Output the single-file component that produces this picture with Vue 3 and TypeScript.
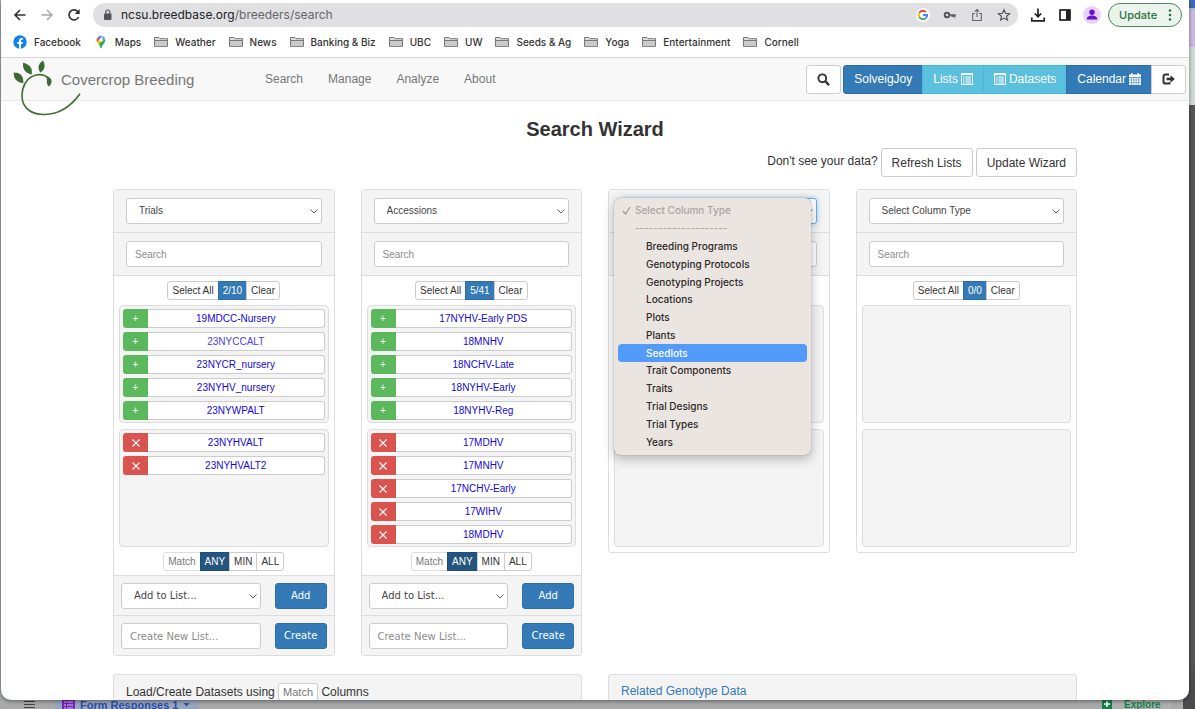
<script setup lang="ts">
import { ref } from 'vue'

interface Column {
  id: string
  type: string
  counts: string
  available: string[]
  selected: string[]
  visited?: string
  hasLists: boolean
  open?: boolean
}

const bookmarks: string[] = ['Weather', 'News', 'Banking & Biz', 'UBC', 'UW', 'Seeds & Ag', 'Yoga', 'Entertainment', 'Cornell']
const navLinks: string[] = ['Search', 'Manage', 'Analyze', 'About']
const columnTypes: string[] = [
  'Breeding Programs', 'Genotyping Protocols', 'Genotyping Projects', 'Locations', 'Plots', 'Plants',
  'Seedlots', 'Trait Components', 'Traits', 'Trial Designs', 'Trial Types', 'Years',
]
const highlighted = ref('Seedlots')
const modes: string[] = ['ANY', 'MIN', 'ALL']

const columns = ref<Column[]>([
  {
    id: 'c1', type: 'Trials', counts: '2/10', hasLists: true, visited: '23NYCCALT',
    available: ['19MDCC-Nursery', '23NYCCALT', '23NYCR_nursery', '23NYHV_nursery', '23NYWPALT'],
    selected: ['23NYHVALT', '23NYHVALT2'],
  },
  {
    id: 'c2', type: 'Accessions', counts: '5/41', hasLists: true,
    available: ['17NYHV-Early PDS', '18MNHV', '18NCHV-Late', '18NYHV-Early', '18NYHV-Reg'],
    selected: ['17MDHV', '17MNHV', '17NCHV-Early', '17WIHV', '18MDHV'],
  },
  { id: 'c3', type: 'Select Column Type', counts: '0/0', hasLists: false, available: [], selected: [], open: true },
  { id: 'c4', type: 'Select Column Type', counts: '0/0', hasLists: false, available: [], selected: [] },
])
</script>

<template>
  <div class="desktop">
    <div class="window">
      <header class="toolbar">
        <button class="tool" aria-label="Back">
          <svg width="16" height="16" viewBox="0 0 16 16" fill="none" stroke="#333" stroke-width="1.6"><path d="M13.5 8H3M8 3L3 8l5 5" /></svg>
        </button>
        <button class="tool" aria-label="Forward">
          <svg width="16" height="16" viewBox="0 0 16 16" fill="none" stroke="#a5a5a5" stroke-width="1.4"><path d="M2.500 8H13M8 3l5 5-5 5" /></svg>
        </button>
        <button class="tool" aria-label="Reload">
          <svg width="16" height="16" viewBox="0 0 16 16" fill="none" stroke="#333" stroke-width="1.7"><path d="M12.600 10A5 5 0 1 1 11.800 4.600" /><path d="M13.700 2v5H8.700z" fill="#333" stroke="none" /></svg>
        </button>
        <div class="address">
          <svg width="9" height="12" viewBox="0 0 9 12"><rect x="1" y="4.500" width="7.500" height="6.500" rx="1" fill="#555" /><path d="M2.800 5V3a2 2 0 0 1 4 0v2" fill="none" stroke="#555" stroke-width="1.200" /></svg>
          <span class="url">ncsu.breedbase.org<i>/breeders/search</i></span>
          <span class="address-icons">
            <button class="mini" aria-label="Google">
              <svg width="14" height="14" viewBox="0 0 14 14"><circle cx="7" cy="7" r="7" fill="#fff" /><g fill="none" stroke-width="1.900"><path d="M3.300 4.900A4.200 4.200 0 0 1 10 4.100" stroke="#ea4335" /><path d="M3.300 4.900a4.200 4.200 0 0 0 0 4.200" stroke="#fbbc05" /><path d="M3.300 9.100a4.200 4.200 0 0 0 6.500 1" stroke="#34a853" /><path d="M9.800 10.100A4 4 0 0 0 11.200 7H7" stroke="#4285f4" /></g></svg>
            </button>
            <button class="mini" aria-label="Passwords">
              <svg width="14" height="14" viewBox="0 0 14 14" fill="none" stroke="#555"><circle cx="4" cy="7" r="2.300" stroke-width="1.900" /><path d="M6.500 7h6.200M11.500 7v2.600M9.300 7v2" stroke-width="1.700" /></svg>
            </button>
            <button class="mini" aria-label="Share">
              <svg width="14" height="14" viewBox="0 0 14 14" fill="none" stroke="#666" stroke-width="1.100"><path d="M5 5.500H2.700v7h8.600v-7H9M7 9V1.500M4.800 3.600L7 1.500l2.200 2.100" /></svg>
            </button>
            <button class="mini" aria-label="Bookmark">
              <svg width="14" height="14" viewBox="0 0 14 14" fill="none" stroke="#555" stroke-width="1.200"><path d="M7 1.700l1.600 3.600 3.900.4-2.900 2.600.8 3.800L7 10.100l-3.400 2 .8-3.800L1.500 5.700l3.900-.4z" /></svg>
            </button>
          </span>
        </div>
        <div class="tool-right">
          <button class="tool" aria-label="Downloads">
            <svg width="16" height="16" viewBox="0 0 16 16" fill="none" stroke="#222" stroke-width="1.700"><path d="M8 1.500v8M4.800 6.500L8 9.700l3.200-3.200M1.800 10.500v3.400h12.400v-3.400" /></svg>
          </button>
          <button class="tool" aria-label="Side panel">
            <svg width="14" height="14" viewBox="0 0 14 14"><rect x="2" y="2" width="10" height="10" fill="none" stroke="#222" stroke-width="1.700" /><path d="M8 2h4v10H8z" fill="#222" /></svg>
          </button>
          <button class="tool" aria-label="Profile">
            <svg width="18" height="18" viewBox="0 0 18 18"><circle cx="9" cy="9" r="9" fill="#e6d3fb" /><circle cx="9" cy="6.200" r="2.700" fill="#6a0fd0" /><path d="M3.700 13.600c0-3 2.700-4 5.300-4s5.300 1 5.300 4z" fill="#6a0fd0" /></svg>
          </button>
          <button class="update">Update
            <svg width="4" height="14" viewBox="0 0 4 14" fill="#27733c"><circle cx="2" cy="2.500" r="1.300" /><circle cx="2" cy="7" r="1.300" /><circle cx="2" cy="11.500" r="1.300" /></svg>
          </button>
        </div>
      </header>

      <nav class="bookmarks" aria-label="Bookmarks">
        <a href="#">
          <svg width="14" height="14" viewBox="0 0 14 14"><circle cx="7" cy="7" r="6.700" fill="#1080f0" /><path d="M6 13.700V9H4.300V7H6V5.600c0-1.800 1-2.700 2.600-2.700.5 0 1 .1 1.300.1v1.700h-.8c-.8 0-1.100.5-1.100 1V7h1.800l-.3 2H8v4.700z" fill="#fff" /></svg>
          Facebook</a>
        <a href="#">
          <svg width="14" height="14" viewBox="-2 0 14 14"><path d="M5 .8A4.300 4.300 0 0 0 1.600 2.400L3.700 4.200 6.400 1z" fill="#4285f4" /><path d="M1.600 2.400A4.300 4.300 0 0 0 1 6.700L3.700 4.200z" fill="#ea4335" /><path d="M6.400 1A4.300 4.300 0 0 1 9.200 4L6.500 6z" fill="#5a9bf5" /><path d="M1 6.700c.4.900 1 1.600 1.500 2.300L6.600 6 3.700 4.200z" fill="#fbbc04" /><path d="M9.200 4c.7 3.800-3 5.300-3.600 8.700-.2.800-1 .8-1.200 0-.3-1.600-1-2.600-1.900-3.700z" fill="#34a853" /><circle cx="5" cy="5" r="1.500" fill="#fff" /></svg>
          Maps</a>
        <a v-for="name in bookmarks" :key="name" href="#">
          <svg width="14" height="12" viewBox="0 0 14 12" stroke="#777"><path d="M.5 10.500V1.500H5l1 1.200h7.500v7.800z" fill="#dedede" /><path d="M1 4.500h12.500" fill="none" /><path d="M1 5.200h12v5H1z" fill="#c9c9c9" stroke="none" /></svg>
          {{ name }}</a>
      </nav>

      <div class="navbar">
        <svg class="logo" viewBox="0 0 210 170" aria-label="Covercrop logo" role="img">
          <path d="M108 58C96 34 42 36 29 88c-10 48 18 76 67 75 50-1 82-30 105-62" fill="none" stroke="#436f38" stroke-width="5" />
          <g fill="#3d6b33"><path d="M2 37c18 0 30 8 29 32C14 66 2 60 2 37z" /><path d="M30 8c18 4 30 14 26 35C40 40 28 30 30 8z" /><path d="M90 1c8 14 6 28-8 36C72 24 76 10 90 1z" /><path d="M106 50c14 8 12 22 1 29C98 70 104 60 100 50z" /></g>
        </svg>
        <a class="brand" href="#">Covercrop Breeding</a>
        <nav class="links" aria-label="Main"><a v-for="l in navLinks" :key="l" href="#">{{ l }}</a></nav>
        <div class="account">
          <button class="btn" aria-label="Search">
            <svg width="13" height="13" viewBox="0 0 13 13" fill="none" stroke="#333"><circle cx="5.300" cy="5.300" r="3.900" stroke-width="1.900" /><path d="M8.200 8.200l3.900 3.900" stroke-width="2.400" /></svg>
          </button>
          <div class="group">
            <button class="btn primary">SolveigJoy</button>
            <button class="btn info">Lists
              <svg width="12" height="12" viewBox="0 0 12 12" fill="none" stroke="#fff"><path d="M.5.500h11v11H.5zM.5 1.500h11" /><path d="M2 4h1.500M4.500 4H10M2 6h1.500M4.500 6H10M2 8h1.500M4.500 8H10M2 10h1.500M4.500 10H10" /></svg>
            </button>
            <button class="btn info">
              <svg width="12" height="12" viewBox="0 0 12 12" fill="none" stroke="#fff"><path d="M.5.500h11v11H.5zM.5 1.500h11" /><path d="M2 4h1.500M4.500 4H10M2 6h1.500M4.500 6H10M2 8h1.500M4.500 8H10M2 10h1.500M4.500 10H10" /></svg>
              Datasets</button>
            <button class="btn primary">Calendar
              <svg width="12" height="12" viewBox="0 0 12 12"><path d="M0 1.500h2V0h1.500v1.500h5V0H10v1.500h2V4H0zM0 4.700h12V12H0z" fill="#fff" /><path d="M0 7h12M0 9.500h12M2.500 5v7M4.800 5v7M7.200 5v7M9.500 5v7" stroke="#337ab7" stroke-width=".5" /></svg>
            </button>
            <button class="btn" aria-label="Log out">
              <svg width="13" height="12" viewBox="0 0 13 12"><path d="M7 1.500H3.300A1.800 1.800 0 0 0 1.500 3.300v5.400a1.800 1.800 0 0 0 1.800 1.800H7.500V9.200" fill="none" stroke="#333" stroke-width="2" /><path d="M4.500 4.800h4V2.200L12.800 6 8.500 9.800V7.200h-4z" fill="#333" /></svg>
            </button>
          </div>
        </div>
      </div>

      <main class="page">
        <h1>Search Wizard</h1>
        <div class="refresh">
          <span>Don't see your data?</span>
          <button class="btn">Refresh Lists</button>
          <button class="btn">Update Wizard</button>
        </div>

        <div class="columns">
          <section v-for="c in columns" :key="c.id" class="panel">
            <div class="head">
              <div class="pick" :class="{ focus: c.open }">
                <select class="field" :aria-label="'Column type ' + c.id"><option>{{ c.type }}</option></select>
                <svg class="chev" viewBox="0 0 8 5"><path d="M.5.500L4 4l3.500-3.500" /></svg>
                <ul v-if="c.open" class="menu" role="listbox" aria-label="Column types">
                  <li class="off" role="option"><svg width="9" height="9" viewBox="0 0 9 9"><path d="M1 5l2.500 3L8 1" /></svg>Select Column Type</li>
                  <li class="off" role="option">--------------------</li>
                  <li v-for="t in columnTypes" :key="t" role="option" :class="{ hot: t === highlighted }" @mouseenter="highlighted = t">{{ t }}</li>
                </ul>
              </div>
            </div>
            <div class="head"><input class="field" type="text" placeholder="Search" :aria-label="'Search ' + c.type" /></div>
            <div class="body">
              <div class="group small">
                <button class="btn">Select All</button><button class="btn primary">{{ c.counts }}</button><button class="btn">Clear</button>
              </div>
              <div class="well">
                <div v-for="n in c.available" :key="n" class="row">
                  <button class="mark add" :aria-label="'Add ' + n">+</button><a href="#" :class="{ visited: n === c.visited }">{{ n }}</a>
                </div>
              </div>
              <div class="well">
                <div v-for="n in c.selected" :key="n" class="row">
                  <button class="mark remove" :aria-label="'Remove ' + n"><svg width="8" height="8" viewBox="0 0 8 8"><path d="M.5.500l7 7M7.500.500l-7 7" /></svg></button><a href="#">{{ n }}</a>
                </div>
              </div>
              <div v-if="c.hasLists" class="group small match">
                <span class="btn muted">Match</span>
                <button v-for="m in modes" :key="m" class="btn" :class="{ active: m === 'ANY' }">{{ m }}</button>
              </div>
            </div>
            <template v-if="c.hasLists">
              <div class="foot">
                <div class="pick">
                  <select class="field" aria-label="Add to list"><option>Add to List...</option></select>
                  <svg class="chev" viewBox="0 0 8 5"><path d="M.5.500L4 4l3.500-3.500" /></svg>
                </div>
                <button class="btn primary">Add</button>
              </div>
              <div class="foot">
                <input class="field" type="text" placeholder="Create New List..." aria-label="New list name" />
                <button class="btn primary">Create</button>
              </div>
            </template>
          </section>
        </div>

        <div class="more">
          <section class="panel bar">Load/Create Datasets using <span class="tag">Match</span> Columns</section>
          <section class="panel bar"><a href="#">Related Genotype Data</a></section>
        </div>
      </main>
    </div>

    <footer class="sheet">
      <svg class="lines" width="11" height="9" viewBox="0 0 11 9"><path d="M0 1.500h11M0 4.500h11M0 7.500h11" stroke="#444" /></svg>
      <span class="tab">
        <svg width="13" height="9" viewBox="0 0 13 9"><path d="M0 0h13v9H0z" fill="#7627bb" /><path d="M2 2h2M5 2h6M2 5h2M5 5h6M2 8h2M5 8h6" stroke="#d6c3ea" /></svg>
        <b>Form Responses 1</b>
        <svg width="7" height="9" viewBox="0 0 7 9"><path d="M.5 3h6L3.500 6.500z" fill="#2a4fa3" /></svg>
      </span>
      <span class="explore">
        <svg width="10" height="9" viewBox="0 0 10 9"><path d="M0 0h10v9H0z" fill="#178048" /><path d="M5 1v6M2 4h6" stroke="#fff" stroke-width="1.500" /></svg>
        <b>Explore</b>
      </span>
    </footer>
  </div>
</template>

<style>
body { margin: 0; }
</style>

<style scoped>
* { box-sizing: border-box; }
.desktop {
  height: 100vh; display: flex; flex-direction: column; overflow: hidden;
  padding: 0 6px 0 1px; color: #333; font: 12px/17px "Liberation Sans", Arial, sans-serif;
  background: linear-gradient(#3d68b8 0 8px, #b9b9c4 8px 10px, #cdb9e2 10px 47px, #d4dbd6 47px 105px, #56565a 105px 660px, #4b4b4d 690px) right / 12px 100% no-repeat, #a8a9ab;
}
button, input, select { font: inherit; color: inherit; margin: 0; }
a { color: inherit; text-decoration: none; }
svg { display: block; flex: none; }
.window {
  flex: 1; min-height: 0; overflow: hidden; background: #fff; position: relative;
  border-radius: 0 0 10px 10px; box-shadow: 0 1px 4px #0007; display: flex; flex-direction: column;
}
.toolbar { display: flex; align-items: center; height: 30px; flex: none; padding: 0 7px 0 5px; font: 12px/16px Inter, sans-serif; }
.tool { border: 0; background: none; padding: 0; width: 27px; height: 24px; display: grid; place-items: center; }
.address { flex: 1; height: 24px; display: flex; align-items: center; gap: 9px; padding: 0 7px 0 10px; margin-left: 6px; border-radius: 12px; background: #e0e0e2; }
.url { color: #222; font-size: 12px; }
.url i { font-style: normal; color: #666; }
.address-icons { margin-left: auto; display: flex; gap: 13px; }
.mini { border: 0; background: none; padding: 0; }
.tool-right { display: flex; align-items: center; margin-left: 6px; }
.update {
  height: 24px; margin-left: 3px; width: 74px; border: 1px solid #4a8a5c; border-radius: 12px; background: #eaf3ec; color: #27733c;
  font: 500 11px/16px Inter, sans-serif; display: flex; align-items: center; justify-content: space-between; padding: 0 9px 0 10px;
}
.bookmarks { display: flex; align-items: center; gap: 13px; height: 28px; flex: none; padding: 0 12px 4px; border-bottom: 1px solid #d6d6d6; font: 500 10px/14px Inter, sans-serif; color: #333; white-space: nowrap; }
.bookmarks a { display: flex; align-items: center; gap: 7px; }
.navbar { display: flex; align-items: center; height: 43px; flex: none; padding: 0 3px 0 60px; background: #f8f8f8; border-bottom: 1px solid #e7e7e7; position: relative; color: #777; }
.logo { position: absolute; left: 12px; top: 2px; width: 70px; height: 57px; }
.brand { font-size: 15px; width: 204px; white-space: nowrap; }
.links { display: flex; gap: 25px; }
.account { margin-left: auto; display: flex; gap: 2px; }
.group { display: flex; }
.btn {
  display: flex; align-items: center; justify-content: center; gap: 3px; height: 29px; padding: 0 10px; color: #333;
  background: #fff; border: 1px solid #ccc; border-radius: 3px; line-height: 16px; white-space: nowrap;
}
.group .btn { border-radius: 0; }
.group .btn:first-child { border-radius: 3px 0 0 3px; }
.group .btn:last-child { border-radius: 0 3px 3px 0; }
.group .btn + .btn { margin-left: -1px; }
.btn.primary { background: #337ab7; border-color: #2e6da4; color: #fff; }
.btn.info { background: #5bc0de; border-color: #46b8da; color: #fff; }
.page { width: 100%; max-width: 964px; margin: 0 auto; }
h1 { margin: 16px 0 7px; font: bold 20px/24px "Liberation Sans", Arial, sans-serif; text-align: center; }
.refresh { display: flex; justify-content: flex-end; gap: 3px; margin-bottom: 12px; }
.refresh span { padding-top: 5px; }
.columns { display: grid; grid-template-columns: repeat(4, minmax(0, 1fr)); gap: 26px; align-items: start; font-size: 10px; }
.panel { border: 1px solid #ddd; border-radius: 3px; background: #fff; }
.head { background: #f4f4f4; border-bottom: 1px solid #ddd; padding: 8px 12px; }
.pick { position: relative; }
.field {
  display: block; width: 100%; height: 26px; padding: 0 8px; border: 1px solid #ccc; border-radius: 3px; background: #fff;
  color: #555; appearance: none; outline: 0; line-height: 16px;
}
select.field { padding-left: 12px; color: #444; }
.field::placeholder { color: #8c8c8c; opacity: 1; }
.focus .field { border-color: #66afe9; box-shadow: 0 0 5px #66afe999; }
.chev { position: absolute; right: 4px; top: 11px; width: 8px; height: 5px; fill: none; stroke: #666; }
.body { padding: 5px; display: flex; flex-direction: column; align-items: center; gap: 5px; }
.small .btn { height: 19px; padding: 0 4px; line-height: 14px; }
.small .active { background: #245580; border-color: #204d74; color: #fff; }
.small .muted { color: #777; border-color: #ddd; }
.well { width: 100%; height: 118px; padding: 3px; border: 1px solid #ddd; border-radius: 4px; background: #f4f4f4; display: flex; flex-direction: column; gap: 4px; }
.row { display: flex; height: 19px; flex: none; }
.row a { flex: 1; display: grid; place-items: center; border: 1px solid #ccc; border-left: 0; border-radius: 0 3px 3px 0; background: #fff; color: #1408d8; line-height: 14px; }
.row a.visited { color: #4a40e0; }
.mark { width: 25px; padding: 0; border: 0; border-radius: 3px 0 0 3px; color: #fff; display: grid; place-items: center; line-height: 14px; }
.add { background: #5cb85c; }
.remove { background: #d9534f; }
.remove svg { fill: none; stroke: #fff; stroke-width: 1.1; }
.well + .well { margin-top: 1px; }
.match { margin-bottom: -1px; }
.foot { display: grid; grid-template-columns: minmax(0, 141fr) minmax(0, 52fr); gap: 14px; padding: 7px 7px 6px; border-top: 1px solid #ddd; background: #f4f4f4; font: 10px/16px "DejaVu Sans", Verdana, sans-serif; }
.foot .btn { height: 26px; padding: 0; }
.menu {
  position: absolute; z-index: 2; top: 0; left: -7px; right: 6px; height: 257px; margin: 0; padding: 4px; list-style: none;
  display: grid; grid-template-rows: repeat(14, minmax(0, 1fr)); border-radius: 6px; background: #ebe5e1;
  box-shadow: 0 0 1px #0008, 0 4px 12px #0004; font: 500 10px/17px Inter, sans-serif; color: #2b2827;
}
.menu li { display: flex; align-items: center; padding-left: 28px; border-radius: 4px; white-space: nowrap; }
.menu .off { color: #aaa4a1; padding-left: 17px; }
.menu .off svg { margin: 0 4px 0 -13px; fill: none; stroke: #999; stroke-width: 1.3; }
.menu .hot { background: #539bfb; color: #fff; }
.more { display: grid; grid-template-columns: repeat(2, minmax(0, 1fr)); gap: 26px; margin-top: 18px; }
.bar { height: 44px; padding: 8px 12px; background: #f4f4f4; white-space: nowrap; }
.bar a { color: #337ab7; }
.tag { display: inline-block; padding: 0 4px; border: 1px solid #ccc; border-radius: 3px; background: #fff; color: #777; font-size: 11px; line-height: 16px; }
.sheet { height: 9px; flex: none; overflow: hidden; display: flex; font: 11px/10px "Liberation Sans", Arial, sans-serif; }
.lines { margin-left: 23px; }
.tab { margin-left: 20px; padding: 0 7px; width: 144px; display: flex; gap: 5px; background: #98a5be; color: #2a4fa3; white-space: nowrap; }
.explore { margin-left: auto; margin-right: 18px; width: 69px; display: flex; gap: 12px; color: #178048; background: #aeb0b2; font-size: 10px; }
</style>
